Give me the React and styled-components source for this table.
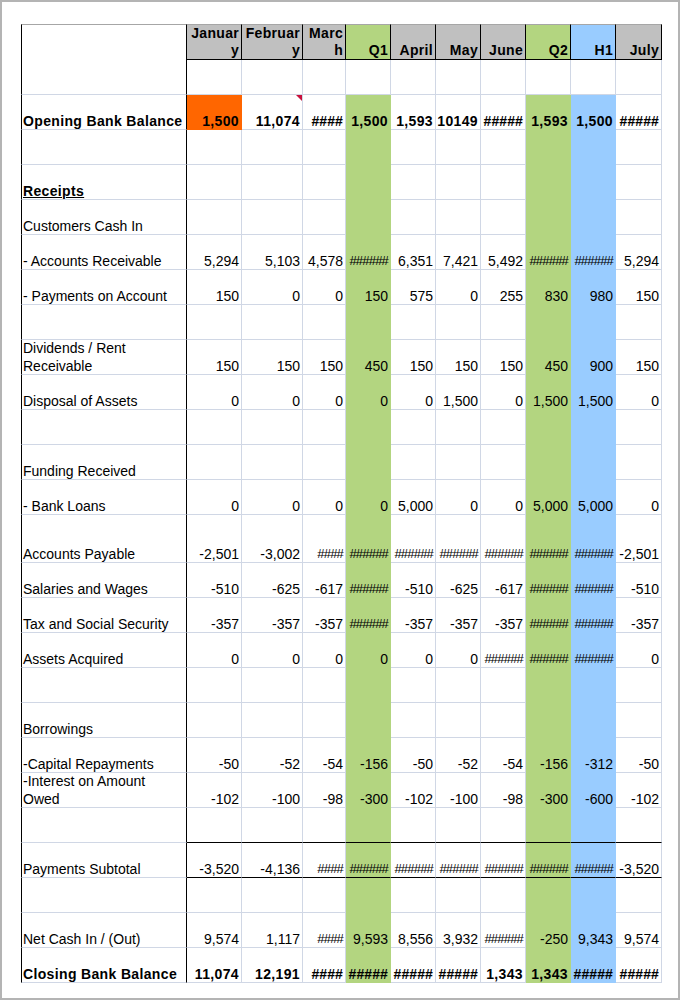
import React from 'react';
import styled, { createGlobalStyle } from 'styled-components';

const GRID = '#d0d7e5';
const GREEN = '#b3d580';
const BLUE = '#99ccff';
const GRAY = '#c0c0c0';
const ORANGE = '#ff6600';

const GlobalStyle = createGlobalStyle`
    html, body {
        margin: 0;
        padding: 0;
        background: #fff;
    }

    body {
        font-family: "Liberation Sans", Arial, sans-serif;
    }
`;

const Frame = styled.div`
    box-sizing: border-box;
    width: 680px;
    height: 1000px;
    border: 2px solid #b4b4b4;
    padding: 22px 0 0 19px;
    background: #fff;
`;

const Sheet = styled.div`
    display: grid;
    grid-template-columns: 166px 55px 61px 43px repeat(6, 45px) 46px;
    grid-template-rows: 36px repeat(13, 35px) 48px repeat(12, 35px);
    width: 641px;
    font-size: 14px;
    color: #000;
`;

const HeadCell = styled.div`
    box-sizing: border-box;
    display: flex;
    align-items: flex-end;
    justify-content: flex-end;
    padding-right: 2px;
    background: ${props => props.$fill || GRAY};
    border-top: 1px solid #a6a6a6;
    border-right: 1px solid #000;
    border-bottom: 1px solid #000;
    font-weight: 700;
    letter-spacing: 0.3px;
    line-height: 17px;
    text-align: right;
    white-space: pre-line;
`;

const Corner = styled.div`
    box-sizing: border-box;
    background: #fff;
    border-top: 1px solid #a6a6a6;
    border-left: 1px solid #000;
    border-right: 1px solid #000;
`;

const LabelCell = styled.div`
    box-sizing: border-box;
    display: flex;
    align-items: flex-end;
    padding-left: 1px;
    border-left: 1px solid #000;
    border-right: 1px solid #000;
    border-bottom: 1px solid ${GRID};
    font-weight: ${props => (props.$bold ? 700 : 400)};
    letter-spacing: ${props => (props.$bold ? '0.35px' : '0')};
    text-decoration: ${props => (props.$underline ? 'underline' : 'none')};
    line-height: 18px;
    white-space: pre-line;
`;

const Cell = styled.div`
    box-sizing: border-box;
    position: relative;
    display: flex;
    align-items: flex-end;
    justify-content: flex-end;
    padding-right: 2px;
    background: ${props => props.$fill || '#fff'};
    border-right: 1px solid ${props => props.$fill || GRID};
    border-bottom: 1px solid ${props => (props.$rule ? '#000' : props.$fill || GRID)};
    font-weight: ${props => (props.$bold ? 700 : 400)};
    letter-spacing: ${props => (props.$bold ? '0.35px' : '0')};
    line-height: 18px;
    white-space: nowrap;
`;

const Text = styled.span`
    margin-bottom: -1px;
`;

// Excel's overflow marker, drawn a little narrower than Arial's own #
const Overflow = styled.span`
    margin-bottom: -1px;
    font-size: ${props => (props.$bold ? '14px' : '13px')};
    letter-spacing: ${props => (props.$bold ? '0.1px' : '-0.8px')};
`;

const CommentMark = styled.span`
    position: absolute;
    top: 0;
    right: 0;
    width: 0;
    height: 0;
    border-top: 6px solid #c8103c;
    border-left: 6px solid transparent;
`;

const columns = [
    { name: 'Januar\ny' },
    { name: 'Februar\ny' },
    { name: 'Marc\nh' },
    { name: 'Q1', fill: GREEN },
    { name: 'April' },
    { name: 'May' },
    { name: 'June' },
    { name: 'Q2', fill: GREEN },
    { name: 'H1', fill: BLUE },
    { name: 'July' },
];

const H6 = '######';
const H5 = '#####';
const H4 = '####';

const rows = [
    { label: '', plain: true },
    {
        label: 'Opening Bank Balance',
        bold: true,
        values: ['1,500', '11,074', H4, '1,500', '1,593', '10149', H5, '1,593', '1,500', H5],
    },
    { label: '' },
    { label: 'Receipts', bold: true, underline: true },
    { label: 'Customers Cash In' },
    {
        label: '- Accounts Receivable',
        values: ['5,294', '5,103', '4,578', H6, '6,351', '7,421', '5,492', H6, H6, '5,294'],
    },
    {
        label: '- Payments on Account',
        values: ['150', '0', '0', '150', '575', '0', '255', '830', '980', '150'],
    },
    { label: '' },
    {
        label: 'Dividends / Rent\nReceivable',
        values: ['150', '150', '150', '450', '150', '150', '150', '450', '900', '150'],
    },
    {
        label: 'Disposal of Assets',
        values: ['0', '0', '0', '0', '0', '1,500', '0', '1,500', '1,500', '0'],
    },
    { label: '' },
    { label: 'Funding Received' },
    {
        label: '- Bank Loans',
        values: ['0', '0', '0', '0', '5,000', '0', '0', '5,000', '5,000', '0'],
    },
    {
        label: 'Accounts Payable',
        values: ['-2,501', '-3,002', H4, H6, H6, H6, H6, H6, H6, '-2,501'],
    },
    {
        label: 'Salaries and Wages',
        values: ['-510', '-625', '-617', H6, '-510', '-625', '-617', H6, H6, '-510'],
    },
    {
        label: 'Tax and Social Security',
        values: ['-357', '-357', '-357', H6, '-357', '-357', '-357', H6, H6, '-357'],
    },
    {
        label: 'Assets Acquired',
        values: ['0', '0', '0', '0', '0', '0', H6, H6, H6, '0'],
    },
    { label: '' },
    { label: 'Borrowings' },
    {
        label: '-Capital Repayments',
        values: ['-50', '-52', '-54', '-156', '-50', '-52', '-54', '-156', '-312', '-50'],
    },
    {
        label: '-Interest on Amount\nOwed',
        values: ['-102', '-100', '-98', '-300', '-102', '-100', '-98', '-300', '-600', '-102'],
    },
    { label: '', rule: true },
    {
        label: 'Payments Subtotal',
        rule: true,
        values: ['-3,520', '-4,136', H4, H6, H6, H6, H6, H6, H6, '-3,520'],
    },
    { label: '' },
    {
        label: 'Net Cash In / (Out)',
        values: ['9,574', '1,117', H4, '9,593', '8,556', '3,932', H6, '-250', '9,343', '9,574'],
    },
    {
        label: 'Closing Bank Balance',
        bold: true,
        values: ['11,074', '12,191', H4, H5, H5, H5, '1,343', '1,343', H5, H5],
    },
];

// the opening balance input is the only orange cell
const cellFill = (row, rowIndex, col, colIndex) => {
    if (rowIndex === 1 && colIndex === 0) return ORANGE;
    if (row.plain) return undefined;
    return col.fill;
};

const App = () => (
    <>
        <GlobalStyle />
        <Frame>
            <Sheet>
                <Corner />
                {columns.map(col => (
                    <HeadCell key={col.name} $fill={col.fill}>
                        {col.name}
                    </HeadCell>
                ))}

                {rows.map((row, r) => (
                    <React.Fragment key={r}>
                        <LabelCell $bold={row.bold} $underline={row.underline}>
                            <Text>{row.label}</Text>
                        </LabelCell>
                        {columns.map((col, c) => {
                            const value = row.values ? row.values[c] : '';
                            return (
                                <Cell
                                    key={col.name}
                                    $fill={cellFill(row, r, col, c)}
                                    $bold={row.bold}
                                    $rule={row.rule}
                                >
                                    {r === 1 && c === 1 && <CommentMark />}
                                    {value.startsWith('#') ? (
                                        <Overflow $bold={row.bold}>{value}</Overflow>
                                    ) : (
                                        <Text>{value}</Text>
                                    )}
                                </Cell>
                            );
                        })}
                    </React.Fragment>
                ))}
            </Sheet>
        </Frame>
    </>
);

export default App;
